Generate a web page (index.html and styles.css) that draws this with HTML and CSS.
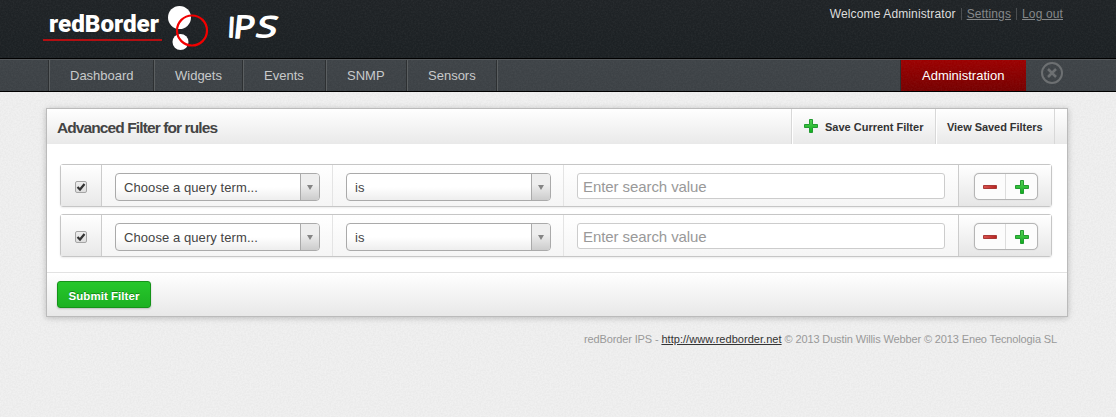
FILE: index.html
```html
<!DOCTYPE html>
<html lang="en">
<head>
<meta charset="utf-8">
<title>redBorder IPS</title>
<link rel="stylesheet" href="styles.css">
</head>
<body>
<svg class="defs" aria-hidden="true">
  <defs>
    <linearGradient id="green" x2="0" y2="1"><stop stop-color="#55d255"/><stop offset="1" stop-color="#0fae1d"/></linearGradient>
    <linearGradient id="red"><stop stop-color="#dc5450"/><stop offset="1" stop-color="#b62320"/></linearGradient>
    <symbol id="plus" viewBox="0 0 14 14"><path d="M5.500.5h3v5h5v3h-5v5h-3v-5h-5v-3h5z" fill="url(#green)" stroke="#239a31"/></symbol>
    <symbol id="minus" viewBox="0 0 14 14"><path d="M.5 5.500h13v3h-13z" fill="url(#red)" stroke="#a83a37"/></symbol>
  </defs>
</svg>
<header class="header">
  <svg class="logo" width="250" height="58" viewBox="0 0 250 58">
    <text class="brand" x="9" y="32" textLength="110" lengthAdjust="spacingAndGlyphs">redBorder</text>
    <path d="M3 40h119" stroke="#b30f12" stroke-width="2"/>
    <circle cx="139.500" cy="17.500" r="11.500" fill="#fff"/>
    <circle cx="140.500" cy="42" r="8" fill="#fff"/>
    <circle cx="152" cy="30.500" r="15" fill="none" stroke="#f20000" stroke-width="2.200"/>
    <g class="product">
      <text transform="translate(187 37) rotate(3)">I</text>
      <text transform="translate(192.500 37.500) skewX(-6) scale(1.280 1.120)">P</text>
      <text transform="translate(214.500 36.500) skewX(-14) scale(1.350 1.030)">S</text>
    </g>
  </svg>
  <div class="account"><span>Welcome Administrator</span><a>Settings</a><a>Log out</a></div>
</header>
<nav class="nav">
  <a>Dashboard</a><a>Widgets</a><a>Events</a><a>SNMP</a><a>Sensors</a>
  <div class="rest"></div>
  <a class="active">Administration</a>
  <svg class="close" width="24" height="24" viewBox="0 0 24 24" fill="none" stroke="#6d7072"><circle cx="12" cy="12" r="10" stroke-width="2"/><path d="M8 8l8 8m0-8l-8 8" stroke-width="2.500"/></svg>
</nav>
<main class="panel">
  <div class="title">
    <h1>Advanced Filter for rules</h1>
    <a class="save"><svg width="14" height="14"><use href="#plus"/></svg>Save Current Filter</a>
    <a class="view">View Saved Filters</a>
  </div>
  <div class="rows">
    <div class="row">
      <div class="check"><span class="box"><svg width="10" height="10" viewBox="0 0 10 10"><path d="M1.500 5l2.500 2.500L8.500 2" fill="none" stroke="#333" stroke-width="2.200"/></svg></span></div>
      <div class="cell"><div class="select"><span>Choose a query term...</span><i></i></div></div>
      <div class="cell"><div class="select"><span>is</span><i></i></div></div>
      <div class="field"><input type="text" placeholder="Enter search value"></div>
      <div class="actions"><div class="group"><b><svg width="14" height="14"><use href="#minus"/></svg></b><b><svg width="14" height="14"><use href="#plus"/></svg></b></div></div>
    </div>
    <div class="row">
      <div class="check"><span class="box"><svg width="10" height="10" viewBox="0 0 10 10"><path d="M1.500 5l2.500 2.500L8.500 2" fill="none" stroke="#333" stroke-width="2.200"/></svg></span></div>
      <div class="cell"><div class="select"><span>Choose a query term...</span><i></i></div></div>
      <div class="cell"><div class="select"><span>is</span><i></i></div></div>
      <div class="field"><input type="text" placeholder="Enter search value"></div>
      <div class="actions"><div class="group"><b><svg width="14" height="14"><use href="#minus"/></svg></b><b><svg width="14" height="14"><use href="#plus"/></svg></b></div></div>
    </div>
  </div>
  <div class="submit"><button>Submit Filter</button></div>
</main>
<footer class="credits">redBorder IPS - <a>http://www.redborder.net</a> © 2013 Dustin Willis Webber © 2013 Eneo Tecnologia SL</footer>
</body>
</html>
```
FILE: styles.css
```css
:root {
  --grain: url("data:image/svg+xml,%3Csvg xmlns='http://www.w3.org/2000/svg' width='150' height='150'%3E%3Cfilter id='n'%3E%3CfeTurbulence type='fractalNoise' baseFrequency='.6' numOctaves='2' stitchTiles='stitch'/%3E%3CfeColorMatrix values='0 0 0 0 0.5 0 0 0 0 0.5 0 0 0 0 0.5 .25 0 0 0 -.06'/%3E%3C/filter%3E%3Crect width='150' height='150' filter='url(%23n)'/%3E%3C/svg%3E");
  --grain-dark: url("data:image/svg+xml,%3Csvg xmlns='http://www.w3.org/2000/svg' width='150' height='150'%3E%3Cfilter id='n'%3E%3CfeTurbulence type='fractalNoise' baseFrequency='.6' numOctaves='2' stitchTiles='stitch'/%3E%3CfeColorMatrix values='0 0 0 0 0.5 0 0 0 0 0.5 0 0 0 0 0.5 .12 0 0 0 -.04'/%3E%3C/filter%3E%3Crect width='150' height='150' filter='url(%23n)'/%3E%3C/svg%3E");
}
* { box-sizing: border-box; }
body {
  margin: 0;
  height: 417px;
  overflow: hidden;
  background: var(--grain), #f1f1f1;
  font: 13px "Liberation Sans", Arial, sans-serif;
}
.defs { position: absolute; width: 0; height: 0; }
.header {
  display: flex;
  justify-content: space-between;
  height: 59px;
  padding: 0 53px 0 40px;
  border-bottom: 1px solid #000;
  background: var(--grain-dark), linear-gradient(#1f2326, #1b2023);
}
.brand { font: 900 23px Roboto, sans-serif; fill: #fff; }
.product { font: 28px "Open Sans", sans-serif; fill: #fff; stroke: #fff; stroke-width: 1.3px; stroke-linejoin: round; }
.account { display: flex; padding-top: 8px; font-size: 12px; letter-spacing: .13px; line-height: 12px; color: #ddd; }
.account a { height: 12px; margin-left: 5px; padding-left: 5px; border-left: 1px solid #4b4e50; color: #85888a; text-decoration: underline; }
.nav {
  display: flex;
  height: 33px;
  padding-left: 48px;
  border-top: 1px solid #55595c;
  border-bottom: 1px solid #000;
  background: var(--grain-dark), linear-gradient(#3e4347, #3c4145);
  color: #c8cacb;
  line-height: 32px;
}
.nav a { padding: 0 0 0 21px; border-left: 1px solid #2d3032; box-shadow: inset 1px 0 #5b5f61; }
.nav a:nth-child(1) { width: 105px; }
.nav a:nth-child(2) { width: 89px; }
.nav a:nth-child(3) { width: 83px; }
.nav a:nth-child(4) { width: 81px; }
.nav a:nth-child(5) { width: 90px; }
.nav .rest { flex: 1; border-left: 1px solid #2d3032; box-shadow: inset 1px 0 #5b5f61; }
.nav .active { width: 126px; padding: 0 0 0 21px; background: var(--grain-dark), linear-gradient(#9c0000, #760000); color: #fff; box-shadow: none; }
.close { margin: 1px 52px 0 14px; }
.panel {
  width: 1022px;
  height: 209px;
  margin: 16px 0 0 46px;
  border: 1px solid #bbb;
  background: #fff;
  box-shadow: 0 1px 6px rgba(0, 0, 0, .22);
}
.title {
  display: flex;
  height: 35px;
  padding-right: 12px;
  background: linear-gradient(#fff, #e9e9e9);
  line-height: 36px;
}
.title h1 { flex: 1; margin: 0; padding-left: 10px; font-size: 15.5px; line-height: 37px; letter-spacing: -.9px; color: #444; }
.title a { border-left: 1px solid #d8d8d8; box-shadow: inset 1px 0 #fff; font-size: 11px; font-weight: bold; color: #333; }
.save { display: flex; width: 144px; padding-left: 12px; }
.save svg { margin: 10px 7px 0 0; }
.title .view { width: 120px; padding-left: 11px; border-right: 1px solid #d8d8d8; letter-spacing: -.05px; }
.rows { display: flex; flex-direction: column; gap: 7px; height: 128px; padding: 20px 15px 0 13px; }
.row {
  display: flex;
  height: 43px;
  border: 1px solid #c6c6c6;
  border-radius: 3px;
  background: linear-gradient(#fff, #f5f5f5);
  box-shadow: 0 1px 2px rgba(0, 0, 0, .08);
}
.check { width: 41px; padding: 16px 0 0 14px; border-right: 1px solid #ccc; background: linear-gradient(#fff, #e8e8e8); }
.box { display: block; width: 12px; height: 12px; border: 1px solid #a5a5a5; border-radius: 2px; background: linear-gradient(#eee, #ddd); }
.box svg { display: block; }
.cell { width: 231px; padding: 8px 0 0 13px; border-right: 1px solid #e4e4e4; }
.select { display: flex; width: 205px; height: 28px; border: 1px solid #aaa; border-radius: 4px; background: linear-gradient(#fff 50%, #eee); overflow: hidden; color: #444; letter-spacing: .08px; line-height: 27px; }
.select span { flex: 1; padding-left: 8px; }
.select i { display: flex; width: 19px; border-left: 1px solid #aaa; background: linear-gradient(#eee 40%, #ccc); }
.select i::after { content: ""; height: 0; margin: 11px 0 0 6px; border: solid transparent; border-width: 5px 3.5px 0; border-top-color: #858585; }
.field { width: 395px; padding: 8px 0 0 13px; border-right: 1px solid #ccc; }
.field input { display: block; width: 368px; height: 26px; padding: 0 5px; border: 1px solid #ccc; border-radius: 3px; background: #fff; font: 15px "Liberation Sans", Arial, sans-serif; letter-spacing: -.08px; }
.field input::placeholder { color: #999; opacity: 1; }
.actions { flex: 1; padding: 8px 0 0 15px; background: linear-gradient(#fff, #e6e6e6); }
.group { display: flex; width: 64px; height: 27px; border: 1px solid #b5b5b5; border-radius: 5px; background: #fcfcfc; box-shadow: 0 0 1px #bbb; }
.group b { display: flex; width: 30px; padding: 6px 0 0 8px; }
.group b + b { width: 32px; padding-left: 9px; border-left: 1px solid #ddd; }
.submit { height: 44px; padding: 8px 10px; border-top: 1px solid #e2e2e2; background: linear-gradient(#fff, #e8e8e8); }
.submit button {
  display: block;
  width: 94px;
  height: 27px;
  padding: 2px 0 0;
  border: 1px solid #159319;
  border-radius: 3px;
  background: linear-gradient(#26c72b, #1db123);
  box-shadow: 0 1px 2px rgba(0, 0, 0, .2);
  color: #fff;
  font: bold 11.5px "Liberation Sans", Arial, sans-serif;
  letter-spacing: .05px;
  text-shadow: 0 -1px rgba(0, 80, 0, .5);
}
.credits { padding: 16px 59px 0 0; color: #999; font-size: 11px; line-height: 13px; letter-spacing: -.13px; text-align: right; }
.credits a { letter-spacing: .04px; color: #333; text-decoration: underline; }
```
